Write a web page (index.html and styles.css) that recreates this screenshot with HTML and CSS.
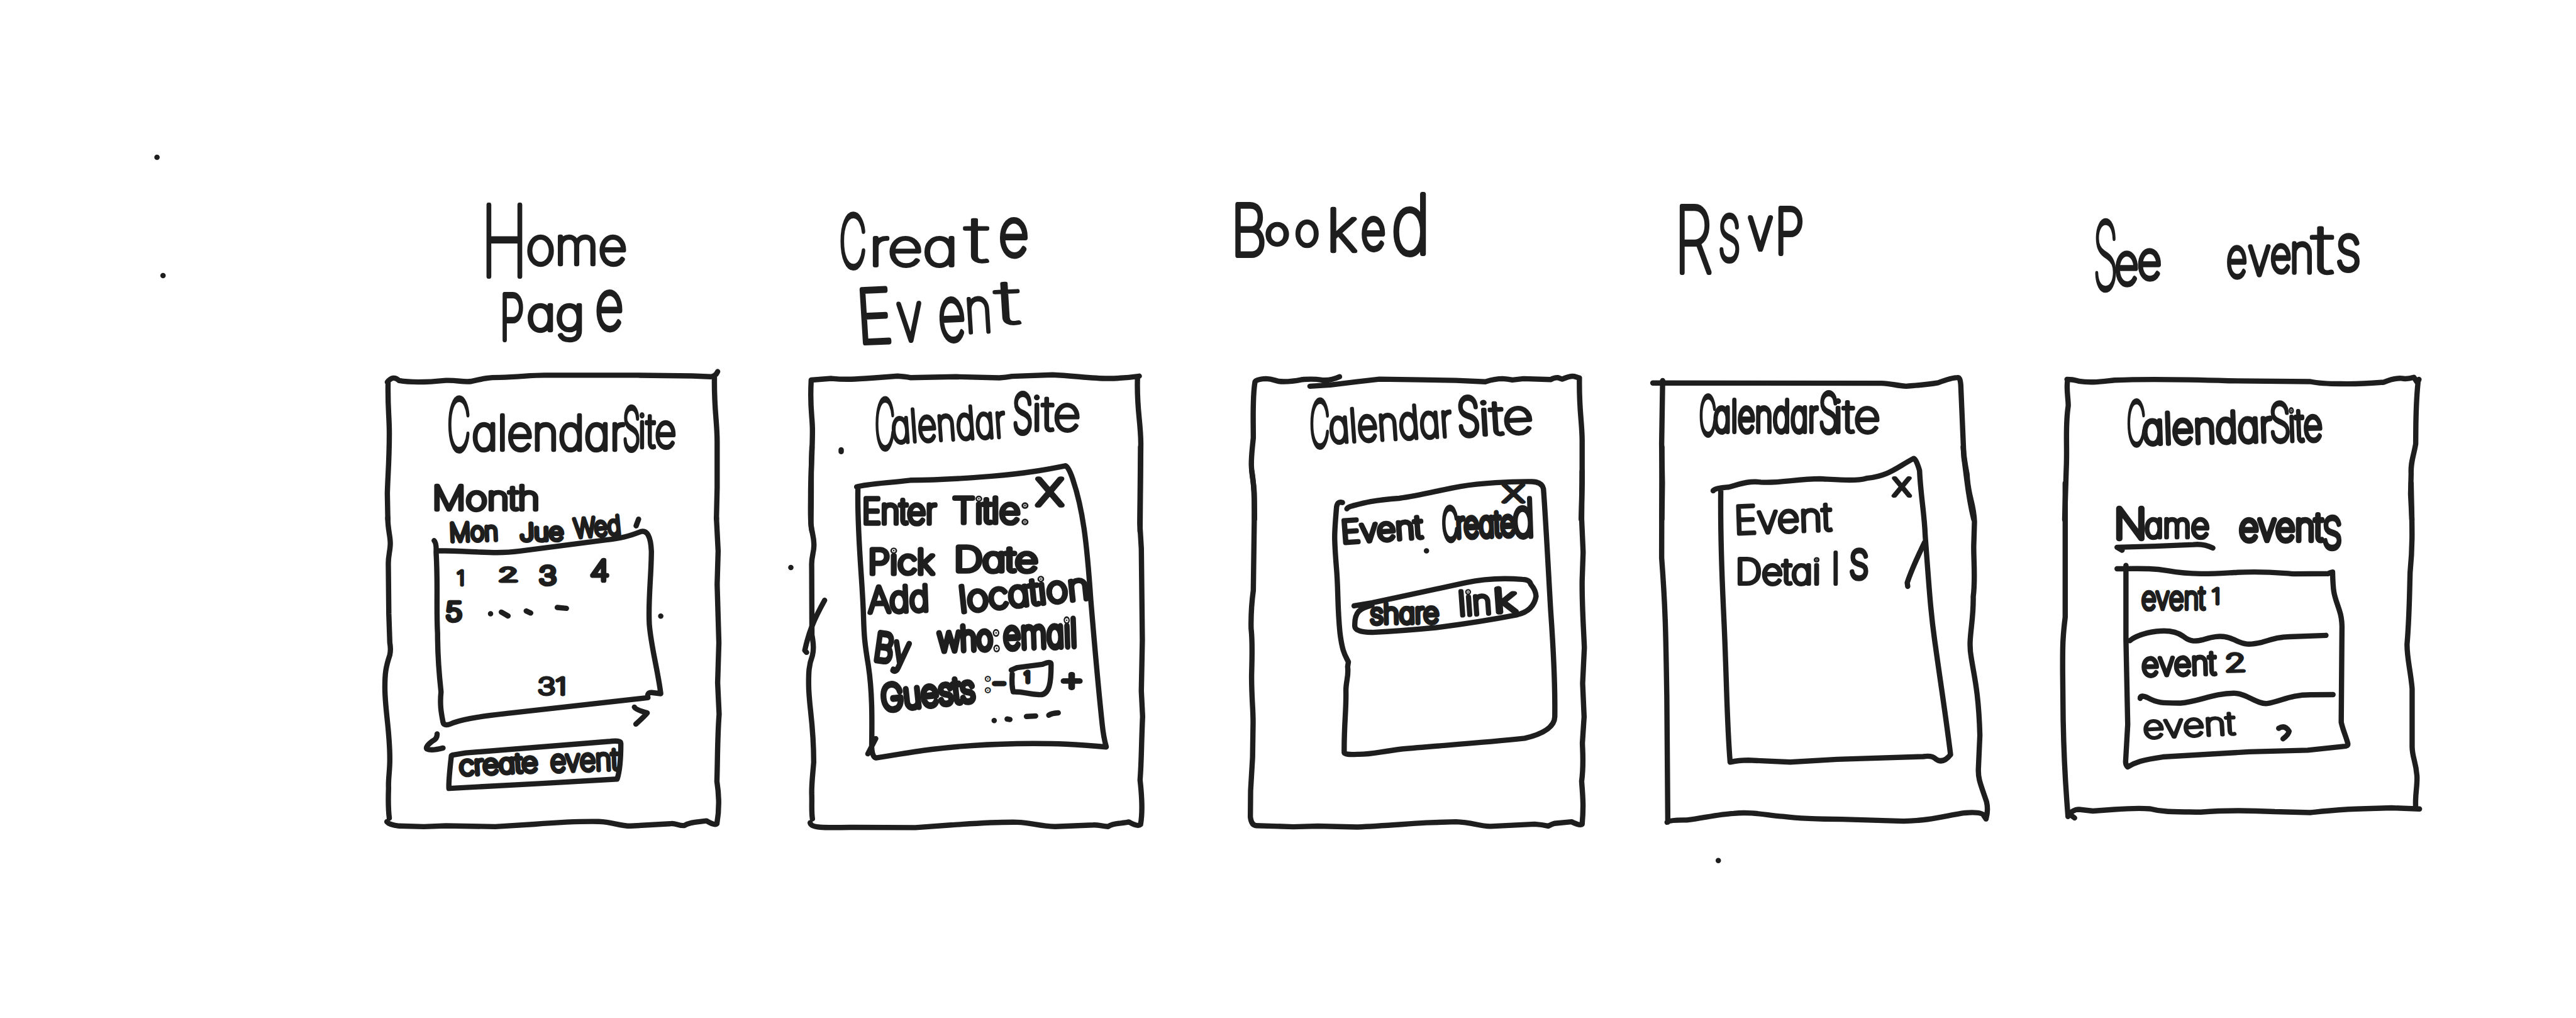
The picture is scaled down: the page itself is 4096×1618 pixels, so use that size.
FILE: index.html
```
<!DOCTYPE html>
<html lang="en">
<head>
<meta charset="utf-8">
<title>CalendarSite wireframes</title>
<link rel="stylesheet" href="styles.css">
</head>
<body>
<main class="board">

<svg class="screen" viewBox="0 0 1260 1686" role="img" aria-label="Home page">
  <path class="ink dot" d="M260 260.3h.1M270 456.3h.1"/>
  <g transform="translate(600 300) scale(.408 .357)">
    <text class="pen"><tspan class="heavy" x="482" y="440" font-size="455" textLength="190" lengthAdjust="spacingAndGlyphs">H</tspan><tspan x="665" y="385" font-size="235" textLength="410" lengthAdjust="spacingAndGlyphs">ome</tspan></text>
    <text class="pen"><tspan class="heavy" x="558" y="735" font-size="290" textLength="100" lengthAdjust="spacingAndGlyphs">P</tspan><tspan x="668" y="692" font-size="215" textLength="235" lengthAdjust="spacingAndGlyphs">ag</tspan><tspan class="heavy" x="946" y="687" font-size="310" textLength="114" lengthAdjust="spacingAndGlyphs">e</tspan></text>
    <path class="ink" d="M102 932Q125 898 150 925C200 935 270 932 340 924C390 922 410 934 445 928C490 916 510 910 560 910C640 908 680 900 740 900L1120 900L1340 903L1415 907Q1435 905 1443 883M105 935C103 1050 110 1090 110 1170C110 1300 103 1380 102 1450L104 1568M1430 910C1428 1060 1441 1110 1441 1210L1441 1420L1438 1568"/>
    <text class="pen"><tspan class="heavy" x="345" y="1250" font-size="330" textLength="95" lengthAdjust="spacingAndGlyphs">C</tspan><tspan x="445" y="1245" font-size="218" textLength="620" lengthAdjust="spacingAndGlyphs">alendar</tspan><tspan class="heavy" x="1057" y="1245" font-size="270" textLength="72" lengthAdjust="spacingAndGlyphs">S</tspan><tspan x="1120" y="1235" font-size="215" textLength="155" lengthAdjust="spacingAndGlyphs">ite</tspan></text>
    <text class="pen" x="285" y="1522" font-size="150" textLength="435" lengthAdjust="spacingAndGlyphs">Month</text>
  </g>
  <g transform="translate(600 820) scale(.408 .370)">
    <path class="ink" d="M104 100C103 150 114 180 114 215C114 250 105 270 106 310L108 530L112 660Q117 690 112 715C95 770 92 800 92 860C92 960 112 1050 112 1180C112 1240 105 1270 107 1310C105 1370 106 1410 110 1445M1438 100L1445 250L1441 400L1448 660L1443 840L1449 980C1442 1080 1443 1180 1440 1280C1450 1350 1448 1420 1440 1470Q1432 1480 1398 1457C1360 1463 1330 1462 1308 1478C1285 1480 1270 1465 1250 1470L1090 1480C1040 1480 1020 1462 960 1460C860 1458 780 1465 700 1472L540 1483L340 1479L250 1483L150 1480Q110 1475 100 1461"/>
    <text class="pen" transform="rotate(-2 355 207)" x="355" y="207" font-size="112" textLength="198" lengthAdjust="spacingAndGlyphs">Mon</text>
    <text class="pen" transform="rotate(-1 640 202)" x="640" y="204" font-size="105" textLength="178" lengthAdjust="spacingAndGlyphs">Jue</text>
    <text class="pen" transform="rotate(-5 865 188)" x="863" y="190" font-size="115" textLength="190" lengthAdjust="spacingAndGlyphs">Wed</text>
    <path class="ink" d="M1122 107L1112 137M292 203Q302 215 300 255C308 400 300 500 306 620C306 720 310 780 320 880C314 940 322 980 328 1015Q332 1038 370 1018C430 995 520 985 600 975L1160 906Q1155 882 1175 883L1212 888C1200 780 1165 640 1165 560C1162 450 1174 350 1174 250Q1170 150 1130 163C1080 185 1050 192 990 200L640 250C540 265 460 250 308 248"/>
    <text class="pen light" x="384" y="403" font-size="88">1</text>
    <text class="pen light" x="552" y="384" font-size="82" textLength="82" lengthAdjust="spacingAndGlyphs">2</text>
    <text class="pen" x="717" y="400" font-size="112" textLength="72" lengthAdjust="spacingAndGlyphs">3</text>
    <text class="pen" x="925" y="382" font-size="128" textLength="78" lengthAdjust="spacingAndGlyphs">4</text>
    <text class="pen" x="338" y="562" font-size="115" textLength="68" lengthAdjust="spacingAndGlyphs">5</text>
    <path class="ink dot" d="M521 530h.1M565 523L592 540M666 518L684 527M792 502L829 506M1212 541h.1"/>
    <text class="pen light" x="712" y="892" font-size="104" textLength="118" lengthAdjust="spacingAndGlyphs">31</text>
    <path class="ink" d="M304 1068Q305 1090 285 1100Q255 1125 262 1135Q280 1145 328 1131M1105 948Q1110 960 1157 974Q1150 985 1111 1024M366 1163L420 1153L1000 1102Q1050 1095 1050 1110Q1050 1220 1035 1270L720 1290L352 1312Q350 1280 362 1165"/>
    <text class="pen" transform="rotate(-3 400 1253)" x="395" y="1253" font-size="118" textLength="320" lengthAdjust="spacingAndGlyphs">create</text>
    <text class="pen" transform="rotate(-2 770 1237)" x="765" y="1237" font-size="132" textLength="275" lengthAdjust="spacingAndGlyphs">event</text>
  </g>
</svg>

<svg class="screen" viewBox="1260 0 730 1686" role="img" aria-label="Create event">
  <g transform="translate(1280 320) scale(.421 .357)">
    <text class="pen"><tspan class="heavy" x="260" y="343" font-size="335" textLength="108" lengthAdjust="spacingAndGlyphs">C</tspan><tspan class="mid" x="378" y="334" font-size="235" textLength="350" lengthAdjust="spacingAndGlyphs">rea</tspan><tspan class="light" x="755" y="318" font-size="290" textLength="94" lengthAdjust="spacingAndGlyphs">t</tspan><tspan class="heavy" x="888" y="288" font-size="300" textLength="118" lengthAdjust="spacingAndGlyphs">e</tspan></text>
    <text class="pen" transform="rotate(-3 350 695)"><tspan class="heavy" x="335" y="695" font-size="340" textLength="140" lengthAdjust="spacingAndGlyphs">E</tspan><tspan class="heavy" x="492" y="692" font-size="310" textLength="102" lengthAdjust="spacingAndGlyphs">v</tspan><tspan class="heavy" x="655" y="700" font-size="345" textLength="108" lengthAdjust="spacingAndGlyphs">e</tspan><tspan x="760" y="668" font-size="285" textLength="110" lengthAdjust="spacingAndGlyphs">n</tspan><tspan class="light" x="884" y="635" font-size="278" textLength="96" lengthAdjust="spacingAndGlyphs">t</tspan></text>
    <path class="ink" d="M150 866L230 859C290 866 330 862 400 856L490 848Q520 850 540 855L720 851L890 856Q915 854 940 849L1100 842C1180 846 1260 860 1320 859Q1380 858 1441 848M150 868C144 1000 155 1030 155 1100C155 1200 148 1300 148 1390C148 1480 145 1530 153 1568M1434 855C1430 1000 1446 1050 1447 1160L1444 1568"/>
    <text class="pen"><tspan class="heavy" x="400" y="1183" font-size="315" textLength="80" lengthAdjust="spacingAndGlyphs">C</tspan></text>
    <text class="pen" transform="rotate(-3.5 470 1155)" x="468" y="1157" font-size="205" textLength="450" lengthAdjust="spacingAndGlyphs">alendar</text>
    <text class="pen"><tspan class="heavy" x="942" y="1112" font-size="250" textLength="80" lengthAdjust="spacingAndGlyphs">S</tspan><tspan class="mid" x="1018" y="1100" font-size="218" textLength="192" lengthAdjust="spacingAndGlyphs">ite</tspan></text>
    <path class="ink dot" d="M268 1190v8"/>
  </g>
  <g transform="translate(1280 740) scale(.421 .421)">
    <path class="ink" d="M153 0C148 100 152 160 149 300C152 340 161 350 161 385C161 420 150 430 152 470L153 740Q163 790 155 820C140 860 140 890 140 930C140 1020 160 1080 160 1240C155 1300 152 1320 152 1360C154 1400 150 1430 155 1463M1446 0L1443 300L1449 400L1453 760L1449 960L1454 1060C1448 1200 1450 1230 1444 1310C1452 1380 1454 1440 1446 1485Q1435 1495 1400 1475C1370 1482 1340 1478 1318 1493C1290 1492 1280 1485 1260 1487L1110 1493C1040 1490 1020 1478 960 1476C860 1475 780 1482 700 1487L560 1497L320 1496C200 1498 150 1500 146 1478"/>
    <path class="ink" d="M203 603C160 680 140 730 125 800L132 808"/>
    <path class="ink dot" d="M70 474h.1M870 1076h.1M921 1070L932 1072M997 1060L1033 1058M1085 1055Q1095 1048 1122 1046"/>
    <path class="ink" d="M329 157C370 145 450 142 540 131C650 130 740 125 860 115C1000 104 1080 88 1150 74Q1160 75 1175 115C1220 240 1235 380 1250 600C1265 780 1280 950 1295 1090Q1300 1140 1311 1180C1200 1170 1120 1165 960 1167C800 1170 700 1180 620 1190C540 1200 460 1215 405 1223Q390 1220 388 1180C390 1060 390 960 375 860C360 770 358 740 356 670C352 520 330 350 334 160M404 1147L373 1207"/>
    <text class="pen" x="350" y="302" font-size="135" textLength="292" lengthAdjust="spacingAndGlyphs">Enter</text>
    <text class="pen" x="706" y="298" font-size="135" textLength="305" lengthAdjust="spacingAndGlyphs">Title:</text>
    <text class="pen" x="1036" y="230" font-size="142" textLength="106" lengthAdjust="spacingAndGlyphs">X</text>
    <text class="pen" x="374" y="500" font-size="132" textLength="260" lengthAdjust="spacingAndGlyphs">Pick</text>
    <text class="pen" x="712" y="488" font-size="132" textLength="330" lengthAdjust="spacingAndGlyphs">Date</text>
    <text class="pen" transform="rotate(-2 378 650)" x="376" y="652" font-size="138" textLength="240" lengthAdjust="spacingAndGlyphs">Add</text>
    <text class="pen" transform="rotate(-6 740 650)" x="736" y="650" font-size="140" textLength="515" lengthAdjust="spacingAndGlyphs">location</text>
    <text class="pen heavy" transform="rotate(8 395 840)" x="392" y="838" font-size="150" textLength="140" lengthAdjust="spacingAndGlyphs">By</text>
    <text class="pen heavy" transform="rotate(-2 655 805)"><tspan x="650" y="803" font-size="130" textLength="245" lengthAdjust="spacingAndGlyphs">who:</tspan><tspan x="908" y="803" font-size="150" textLength="290" lengthAdjust="spacingAndGlyphs">email</tspan></text>
    <text class="pen heavy" transform="rotate(-6 435 1035)" x="430" y="1037" font-size="138" textLength="370" lengthAdjust="spacingAndGlyphs">Guests</text>
    <text class="pen"><tspan x="832" y="960" font-size="95">:</tspan><tspan x="862" y="965" font-size="105" textLength="56" lengthAdjust="spacingAndGlyphs">-</tspan></text>
    <path class="ink" d="M937 878L960 868L1060 855Q1095 840 1094 855C1094 920 1090 980 1045 974C1000 972 990 962 945 963Q938 940 941 893"/>
    <text class="pen" x="990" y="925" font-size="52">1</text>
    <text class="pen" x="1126" y="957" font-size="128" textLength="98" lengthAdjust="spacingAndGlyphs">+</text>
  </g>
</svg>

<svg class="screen" viewBox="1990 0 710 1686" role="img" aria-label="Booked">
  <g transform="translate(2020 300) scale(.408 .357)">
    <text class="pen"><tspan class="heavy" x="48" y="345" font-size="325" textLength="145" lengthAdjust="spacingAndGlyphs">B</tspan><tspan x="186" y="293" font-size="170" textLength="98" lengthAdjust="spacingAndGlyphs">o</tspan><tspan x="306" y="298" font-size="200" textLength="100" lengthAdjust="spacingAndGlyphs">o</tspan><tspan x="435" y="325" font-size="270" textLength="125" lengthAdjust="spacingAndGlyphs">k</tspan><tspan class="heavy" x="575" y="316" font-size="260" textLength="100" lengthAdjust="spacingAndGlyphs">e</tspan><tspan class="heavy" x="698" y="335" font-size="375" textLength="158" lengthAdjust="spacingAndGlyphs">d</tspan></text>
    <path class="ink" d="M488 907C460 922 440 925 415 922C380 915 360 918 335 920C300 928 270 932 240 928C215 920 210 917 190 916Q150 918 145 930C134 1000 138 1100 138 1190C132 1260 130 1270 130 1315C132 1380 142 1400 142 1460L143 1568M368 951L450 945L560 930L650 918L820 921L960 924L1080 930Q1120 916 1150 916Q1170 917 1190 922L1235 916L1345 920Q1360 910 1375 911L1392 918Q1425 902 1440 905L1462 913C1460 1060 1472 1110 1473 1200L1473 1400L1469 1568"/>
    <text class="pen"><tspan class="heavy" x="366" y="1232" font-size="295" textLength="82" lengthAdjust="spacingAndGlyphs">C</tspan></text>
    <text class="pen" transform="rotate(-3.5 450 1213)" x="448" y="1213" font-size="208" textLength="500" lengthAdjust="spacingAndGlyphs">alendar</text>
    <text class="pen" transform="rotate(-3 975 1178)"><tspan class="heavy" x="970" y="1180" font-size="240" textLength="92" lengthAdjust="spacingAndGlyphs">S</tspan><tspan class="mid" x="1056" y="1182" font-size="215" textLength="222" lengthAdjust="spacingAndGlyphs">ite</tspan></text>
  </g>
  <g transform="translate(2020 780) scale(.408 .395)">
    <path class="ink" d="M132 0C142 60 143 120 142 200L138 500C130 560 128 600 129 660C136 720 132 800 131 860C131 960 138 1000 137 1060L135 1200L127 1340L126 1450Q130 1485 150 1486L300 1491L400 1488L560 1492C650 1488 720 1482 840 1474L960 1470C1030 1472 1050 1488 1100 1489L1280 1480Q1310 1482 1335 1488Q1350 1480 1360 1477L1430 1470Q1465 1488 1473 1480C1480 1400 1475 1360 1471 1300C1480 1230 1475 1180 1474 1140L1481 1030L1475 890L1482 740C1478 640 1472 560 1473 460L1477 340L1471 200L1473 0"/>
    <path class="ink" d="M500 132Q480 125 476 150C466 270 466 280 475 400C484 500 478 560 490 680C500 760 510 770 524 800L521 820C526 860 514 880 514 920C516 1000 506 1060 507 1180Q510 1190 560 1187C620 1188 640 1178 740 1165C900 1150 1060 1140 1240 1120Q1360 1090 1362 1030C1364 880 1356 740 1345 580C1335 400 1325 200 1316 75Q1310 45 1270 44C1180 43 1060 50 980 64C900 78 820 102 730 114C620 122 580 135 540 146Q522 150 518 158"/>
    <text class="pen light" x="1150" y="130" font-size="96" textLength="88" lengthAdjust="spacingAndGlyphs">X</text>
    <text class="pen" transform="rotate(-4 500 303)" x="497" y="302" font-size="130" textLength="330" lengthAdjust="spacingAndGlyphs">Event</text>
    <text class="pen heavy" transform="rotate(-2 912 290)"><tspan x="906" y="290" font-size="185" textLength="66" lengthAdjust="spacingAndGlyphs">C</tspan><tspan x="962" y="280" font-size="145" textLength="242" lengthAdjust="spacingAndGlyphs">reate</tspan><tspan x="1192" y="285" font-size="215" textLength="90" lengthAdjust="spacingAndGlyphs">d</tspan></text>
    <path class="ink dot" d="M841 334h.1"/>
    <path class="ink" d="M547 565L620 552L1000 468C1080 450 1160 448 1230 454Q1260 455 1265 475Q1285 500 1286 525C1280 560 1260 590 1210 602C1120 620 1000 640 880 656C800 664 700 672 620 676Q550 675 550 650C548 590 570 575 620 562"/>
    <text class="pen" transform="rotate(-1 620 640)" x="612" y="640" font-size="115" textLength="280" lengthAdjust="spacingAndGlyphs">share</text>
    <text class="pen" transform="rotate(-4 980 603)"><tspan x="974" y="605" font-size="138" textLength="134" lengthAdjust="spacingAndGlyphs">lin</tspan><tspan x="1118" y="603" font-size="138" textLength="92" lengthAdjust="spacingAndGlyphs">k</tspan></text>
  </g>
</svg>

<svg class="screen" viewBox="2700 0 680 1686" role="img" aria-label="RSVP">
  <g transform="translate(2700 300) scale(.408 .357)">
    <text class="pen heavy"><tspan x="180" y="422" font-size="420" textLength="155" lengthAdjust="spacingAndGlyphs">R</tspan><tspan x="358" y="368" font-size="285" textLength="90" lengthAdjust="spacingAndGlyphs">S</tspan><tspan x="482" y="315" font-size="200" textLength="94" lengthAdjust="spacingAndGlyphs">V</tspan><tspan x="588" y="337" font-size="290" textLength="118" lengthAdjust="spacingAndGlyphs">P</tspan></text>
    <path class="ink" d="M92 936L1020 937C1060 938 1080 948 1120 951C1160 947 1200 945 1250 935Q1310 910 1330 911Q1342 908 1343 960L1355 1280C1370 1400 1370 1450 1395 1568M132 925L128 1220L131 1400L129 1568"/>
    <text class="pen"><tspan class="heavy" x="280" y="1177" font-size="245" textLength="70" lengthAdjust="spacingAndGlyphs">C</tspan><tspan class="heavy" x="338" y="1160" font-size="200" textLength="425" lengthAdjust="spacingAndGlyphs">alendar</tspan><tspan class="heavy" x="766" y="1165" font-size="250" textLength="80" lengthAdjust="spacingAndGlyphs">S</tspan><tspan class="mid" x="824" y="1165" font-size="205" textLength="192" lengthAdjust="spacingAndGlyphs">ite</tspan></text>
  </g>
  <g transform="translate(2700 740) scale(.408 .459)">
    <path class="ink" d="M129 0L128 400C145 600 145 700 149 900L153 1353M150 1354Q160 1345 230 1346C300 1338 360 1325 420 1322C500 1315 560 1330 620 1333C700 1342 800 1343 860 1343L1110 1350C1220 1348 1280 1330 1360 1320Q1430 1315 1436 1330L1445 1342Q1455 1310 1447 1280C1425 1220 1412 1200 1414 1160L1420 1040C1415 880 1395 820 1385 760C1370 690 1395 640 1393 540C1402 480 1395 420 1395 360L1398 270C1395 200 1372 180 1368 100Q1355 40 1352 0"/>
    <path class="ink" d="M337 158Q345 148 400 145C450 133 480 122 530 127C600 132 680 115 770 115C840 118 920 124 960 113C1050 105 1080 75 1150 42Q1160 40 1175 85C1180 180 1195 240 1198 320C1215 520 1220 600 1240 720C1265 880 1280 960 1301 1110Q1270 1145 1240 1125Q1225 1112 1190 1117L840 1127L650 1137L480 1130Q440 1130 406 1137C395 1020 393 900 387 760C380 560 365 420 368 158"/>
    <text class="pen light" x="1066" y="177" font-size="115" textLength="74" lengthAdjust="spacingAndGlyphs">x</text>
    <text class="pen light" transform="rotate(-2 430 310)" x="424" y="314" font-size="138" textLength="395" lengthAdjust="spacingAndGlyphs">Event</text>
    <text class="pen light"><tspan x="428" y="495" font-size="125" textLength="345" lengthAdjust="spacingAndGlyphs">Detai</tspan><tspan x="818" y="493" font-size="155">l</tspan><tspan class="mid" x="888" y="474" font-size="185" textLength="82" lengthAdjust="spacingAndGlyphs">s</tspan></text>
    <path class="ink" d="M1195 345C1165 400 1140 450 1125 490L1127 503"/>
    <path class="ink dot" d="M358 1492h.1"/>
  </g>
</svg>

<svg class="screen" viewBox="3380 0 887 1686" role="img" aria-label="See events">
  <g transform="translate(3380 340) scale(.421 .332)">
    <text class="pen heavy"><tspan x="206" y="418" font-size="465" textLength="98" lengthAdjust="spacingAndGlyphs">S</tspan><tspan x="290" y="395" font-size="285" textLength="95" lengthAdjust="spacingAndGlyphs">e</tspan><tspan x="380" y="366" font-size="260" textLength="95" lengthAdjust="spacingAndGlyphs">e</tspan></text>
    <text class="pen heavy"><tspan x="730" y="355" font-size="270" textLength="82" lengthAdjust="spacingAndGlyphs">e</tspan><tspan x="815" y="348" font-size="260" textLength="90" lengthAdjust="spacingAndGlyphs">v</tspan><tspan x="903" y="330" font-size="240" textLength="82" lengthAdjust="spacingAndGlyphs">e</tspan><tspan x="980" y="335" font-size="265" textLength="95" lengthAdjust="spacingAndGlyphs">n</tspan><tspan class="mid" x="1066" y="338" font-size="335" textLength="86" lengthAdjust="spacingAndGlyphs">t</tspan><tspan x="1160" y="323" font-size="310" textLength="100" lengthAdjust="spacingAndGlyphs">s</tspan></text>
    <path class="ink" d="M103 868Q130 868 150 877C200 887 240 878 290 872C400 866 560 868 740 875L1060 879Q1100 890 1180 890C1260 892 1310 886 1350 882Q1390 860 1420 863Q1440 868 1468 858L1482 885L1488 868M105 875C100 920 108 960 108 1000C95 1100 105 1200 100 1320L94 1568M1484 885C1474 1010 1476 1100 1475 1190C1465 1260 1455 1280 1457 1340L1455 1440L1460 1568"/>
    <text class="pen"><tspan class="heavy" x="338" y="1193" font-size="300" textLength="75" lengthAdjust="spacingAndGlyphs">C</tspan></text>
    <text class="pen heavy" transform="rotate(-1.5 405 1190)"><tspan x="400" y="1190" font-size="210" textLength="510" lengthAdjust="spacingAndGlyphs">alendar</tspan><tspan x="902" y="1190" font-size="260" textLength="83" lengthAdjust="spacingAndGlyphs">S</tspan><tspan x="976" y="1190" font-size="218" textLength="134" lengthAdjust="spacingAndGlyphs">ite</tspan></text>
  </g>
  <g transform="translate(3380 800) scale(.421 .370)">
    <path class="ink" d="M96 0L96 600C85 700 86 740 86 840L88 1060C92 1300 100 1380 107 1492M133 1498L112 1480Q130 1460 150 1460L205 1467L290 1460C350 1455 380 1453 430 1457C480 1472 520 1470 630 1472C740 1462 820 1464 920 1470L1060 1474C1140 1465 1180 1460 1240 1458L1380 1453L1490 1458M1475 1450C1472 1390 1482 1360 1480 1310C1475 1240 1462 1230 1461 1180L1461 920C1455 840 1440 780 1441 720C1450 600 1450 520 1453 400C1465 260 1460 180 1457 0"/>
    <text class="pen"><tspan class="heavy" x="288" y="248" font-size="185" textLength="128" lengthAdjust="spacingAndGlyphs">N</tspan><tspan x="408" y="243" font-size="150" textLength="255" lengthAdjust="spacingAndGlyphs">ame</tspan></text>
    <text class="pen heavy"><tspan x="780" y="255" font-size="168" textLength="330" lengthAdjust="spacingAndGlyphs">event</tspan><tspan x="1106" y="290" font-size="255" textLength="80" lengthAdjust="spacingAndGlyphs">s</tspan></text>
    <path class="ink" d="M320 300L300 287L450 282L600 275Q640 270 677 290M300 383C400 382 440 380 500 392C600 412 680 405 760 400C880 392 940 402 1000 406L1130 405Q1145 398 1148 398C1150 500 1155 500 1175 570Q1184 600 1185 640L1182 1070C1190 1110 1200 1130 1208 1165Q1210 1178 1190 1178L1050 1195L820 1202L480 1225C400 1238 370 1250 342 1270Q332 1260 334 1240L342 1080L335 700L335 368M350 705Q370 685 420 670C480 655 530 660 560 685C590 712 610 708 640 700C690 682 720 680 760 700C800 724 820 725 870 712C920 695 940 688 980 687L1122 681M391 963Q392 945 420 960C460 985 480 984 550 984C620 978 680 940 760 940C810 940 850 990 890 986C950 975 980 945 1070 947L1150 946"/>
    <text class="pen"><tspan x="396" y="564" font-size="138" textLength="250" lengthAdjust="spacingAndGlyphs">event</tspan><tspan class="light" x="672" y="540" font-size="96">1</tspan></text>
    <text class="pen" transform="rotate(-1.5 400 860)"><tspan x="398" y="862" font-size="142" textLength="292" lengthAdjust="spacingAndGlyphs">event</tspan><tspan class="light" x="724" y="852" font-size="108" textLength="86" lengthAdjust="spacingAndGlyphs">2</tspan></text>
    <text class="pen light" transform="rotate(-3 410 1140)" x="404" y="1142" font-size="140" textLength="362" lengthAdjust="spacingAndGlyphs">event</text>
    <path class="ink" d="M936 1097Q960 1080 977 1110Q975 1125 953 1144"/>
  </g>
</svg>

</main>
</body>
</html>
```
FILE: styles.css
```
html,
body {
  margin: 0;
  background: #fff;
}

.board {
  display: grid;
  grid-template-columns: 1260fr 730fr 710fr 680fr 887fr;
  width: 100vw;
  height: 100vh;
  overflow: hidden;
}

.screen {
  display: block;
  width: 100%;
  height: 100%;
  overflow: visible;
}

.ink {
  fill: none;
  stroke: #1e1e1e;
  stroke-width: 8.4px;
  stroke-linecap: round;
  stroke-linejoin: round;
  vector-effect: non-scaling-stroke;
}

.dot {
  stroke-width: 8.5px;
}

.pen {
  font-family: Inter, "Liberation Sans", sans-serif;
  font-weight: 100;
  font-feature-settings: "cv11" 1, "ss03" 1;
  fill: #1e1e1e;
  stroke: #1e1e1e;
  stroke-width: 19px;
  stroke-linecap: round;
  stroke-linejoin: round;
}

.heavy {
  stroke-width: 24px;
}

.mid {
  stroke-width: 17px;
}

.light {
  stroke-width: 14px;
}
```
